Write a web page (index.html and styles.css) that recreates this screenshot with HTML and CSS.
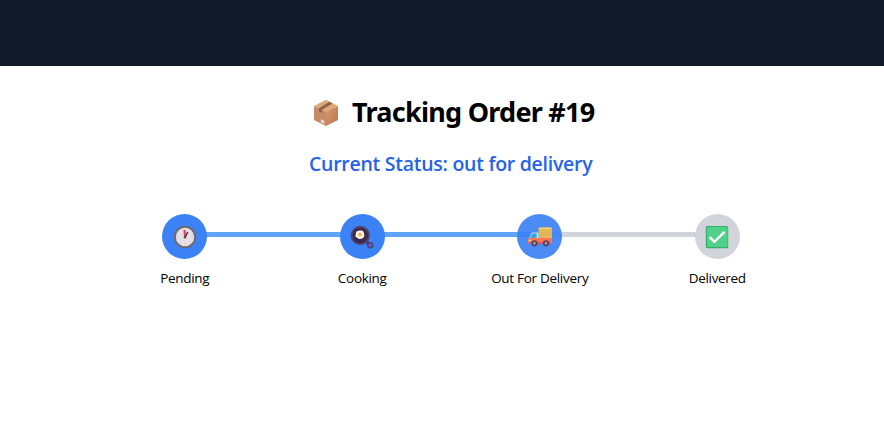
FILE: index.html
```html
<!DOCTYPE html>
<html lang="en">
<head>
<meta charset="utf-8">
<title>Tracking Order #19</title>
<link rel="stylesheet" href="styles.css">
</head>
<body>
<header class="topbar"></header>
<main class="tracking">
  <h1 class="title">
    <svg class="box" viewBox="0 0 26 28" aria-hidden="true">
      <defs><linearGradient id="side" x2="1" y2="1"><stop stop-color="#d79b6c"/><stop offset="1" stop-color="#b97354"/></linearGradient></defs>
      <path d="M1 7 13 12.500V27L2 21.500Q1 21 1 20Z" fill="#c68a68"/>
      <path d="M25 7 13 12.500V27L24 21.500Q25 21 25 20Z" fill="url(#side)"/>
      <path d="M1 7 12 1.300Q13 .8 14 1.300L25 7 13 12.700Z" fill="#dda976"/>
      <path d="M16.500 2.800 19.500 4.400 9 10.800V14L6 12.500V9.300Z" fill="#8d6047"/>
      <path d="m7.800 20.300 3.500 1.400v3L7.800 23.300Z" fill="#e7d9e8"/>
    </svg>
    <span class="title-text">Tracking Order #19</span>
  </h1>
  <p class="status">Current Status: out for delivery</p>
  <ol class="steps">
    <li class="step done">
      <span class="dot"><svg class="icon" viewBox="0 0 24 24" aria-hidden="true">
        <circle cx="12" cy="12" r="10.200" fill="#e5e1e9" stroke="#6f6870" stroke-width="2"/>
        <path d="M12 4v1.500M12 18.500V20M4 12h1.500M18.500 12H20M6.500 6.500l.8.8M17.500 17.500l-.8-.8M6.500 17.500l.8-.8" stroke="#cbc5d0" stroke-width="1"/>
        <path d="m12 12.500-.5-7.500" stroke="#e5365f" stroke-width="2"/>
        <path d="m12 12.500 2.800-5.500" stroke="#5c3048" stroke-width="1.600"/>
        <circle cx="12" cy="12.300" r="1.200" fill="#773853"/>
      </svg></span>
      <span class="label">Pending</span>
    </li>
    <li class="step done">
      <span class="dot"><svg class="icon" viewBox="0 0 24 24" aria-hidden="true">
        <path d="m15.500 15.500 4 4" stroke="#493965" stroke-width="3.500"/>
        <circle cx="20.300" cy="20.300" r="2.300" fill="none" stroke="#57457a" stroke-width="1.900"/>
        <circle cx="10.300" cy="10.500" r="9.700" fill="#544371"/>
        <circle cx="10.300" cy="10.500" r="7.800" fill="#3b2a4d"/>
        <path d="M6 9c-.5-3 2-3.300 4-3.500 3-.5 4 1.500 4 3.500 1 2-.5 4.500-2.500 4.500C9 15 8 13 7 12.500 5 12 5 10 6 9Z" fill="#fff8f2"/>
        <circle cx="10" cy="9.500" r="1.900" fill="#f8b43c"/>
      </svg></span>
      <span class="label">Cooking</span>
    </li>
    <li class="step current">
      <span class="dot"><svg class="icon truck" viewBox="0 0 24 24" aria-hidden="true">
        <path d="M10.500 3q0-1.500 1.500-1.500h10.500Q24 1.500 24 3v11H10.500Z" fill="#e0b44c"/>
        <path d="M12 1.500h10.500Q24 1.500 24 3H10.500q0-1.500 1.500-1.500Z" fill="#f2ca62"/>
        <path d="M3.500 6.500h7V13H1Z" fill="#dedbea"/>
        <path d="M4 7.500h4.700V12H2Z" fill="#35a8d5"/>
        <path d="M1 12h23v5.500H1Q.2 17.500.2 16.500V13Q.2 12 1 12Z" fill="#fa6b42"/>
        <path d="M1 16h22v2H1Z" fill="#df484f"/>
        <circle cx="1.600" cy="14.500" r="1.100" fill="#ffda63"/>
        <g fill="#aaa0b7" stroke="#4b374f" stroke-width="1.900"><circle cx="6.500" cy="17.300" r="2.200"/><circle cx="18" cy="17.300" r="2.200"/></g>
      </svg></span>
      <span class="label">Out For Delivery</span>
    </li>
    <li class="step">
      <span class="dot"><svg class="icon" viewBox="0 0 24 24" aria-hidden="true">
        <rect x=".8" y="1" width="22.400" height="22.200" rx="1.500" fill="#35ae69"/>
        <rect x="2" y="2" width="20.500" height="20" rx="1" fill="#4fd18a"/>
        <path d="m4.800 12.200 4.600 4.600L19.500 6.900" fill="none" stroke="#fff" stroke-width="2.400"/>
      </svg></span>
      <span class="label">Delivered</span>
    </li>
  </ol>
</main>
</body>
</html>
```
FILE: styles.css
```css
* { box-sizing: border-box; }
body {
  margin: 0;
  background: #fff;
  color: #000;
  font-family: "Open Sans", "Noto Sans", sans-serif;
}
.topbar { height: 66px; background: #111827; }
.tracking { width: 710px; margin-left: 96px; padding-top: 27px; }
.title {
  display: flex;
  align-items: center;
  height: 38px;
  margin: 0 0 0 217px;
  font: 700 27px/38px "Noto Sans", sans-serif;
  letter-spacing: -0.74px;
  white-space: nowrap;
}
.box { width: 26px; height: 28px; margin: 2px 13px 0 0; }
.status {
  height: 28px;
  margin: 19px 0 0 213px;
  color: #2563eb;
  font-size: 19.5px;
  font-weight: 600;
  line-height: 28px;
  letter-spacing: -0.27px;
  white-space: nowrap;
}
.steps {
  display: grid;
  grid-template-columns: repeat(4, 1fr);
  margin: 36px 0 0;
  padding: 0;
  list-style: none;
}
.step {
  position: relative;
  display: flex;
  flex-direction: column;
  align-items: center;
}
.step:not(:last-child)::after {
  content: "";
  position: absolute;
  top: 18px;
  left: 50%;
  width: 100%;
  height: 5px;
  background: #d1d5db;
}
.step.done::after { background: #60a5fa; }
.dot {
  position: relative;
  z-index: 1;
  display: flex;
  align-items: center;
  justify-content: center;
  width: 45px;
  height: 45px;
  border-radius: 50%;
  background: #d1d5db;
}
.done .dot, .current .dot { background: #3b82f6; }
.current .dot { opacity: .92; }
.icon { width: 24px; height: 24px; }
.truck { margin-top: 3px; }
.label {
  margin-top: 9px;
  font-size: 13.5px;
  line-height: 20px;
  letter-spacing: -0.3px;
  white-space: nowrap;
}
```
